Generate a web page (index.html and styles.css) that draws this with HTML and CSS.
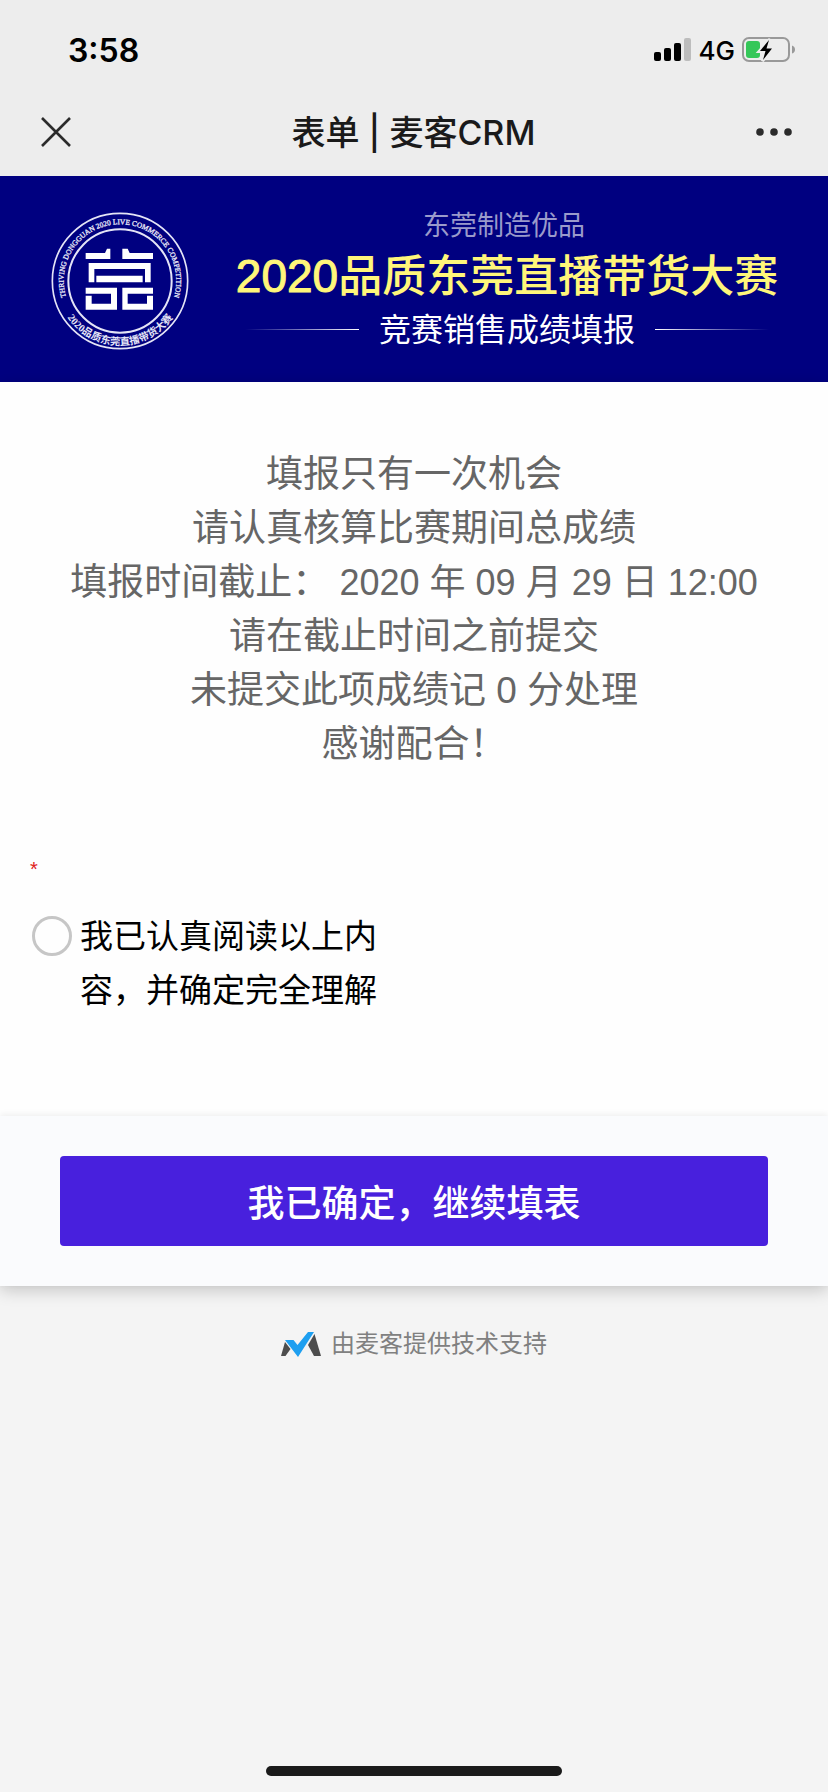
FILE: index.html
```html
<!DOCTYPE html>
<html lang="zh-CN">

<head>
    <meta charset="UTF-8">
    <meta name="viewport" content="width=device-width, initial-scale=1.0">
    <title>表单 | 麦客CRM</title>

    <link rel="stylesheet" href="styles.css">
</head>

<body>
    <header class="top">
        <div class="status-bar">
            <span class="time">3:58</span>
            <div class="status-icons">
                <svg class="signal" width="38" height="24" viewBox="0 0 38 24">
                    <rect x="0" y="14" width="7" height="9" rx="2" />
                    <rect x="10" y="10" width="7" height="13" rx="2" />
                    <rect x="20" y="5" width="7" height="18" rx="2" />
                    <rect x="30" y="0" width="7" height="23" rx="2" fill="#bdbdbd" />
                </svg>
                <span class="network">4G</span>
                <svg class="battery" width="54" height="26" viewBox="0 0 54 26">
                    <rect x="1" y="1" width="46" height="23" rx="6" fill="none" stroke="#999" stroke-width="2" />
                    <rect x="4" y="4" width="14" height="17" rx="3" fill="#35c759" />
                    <path d="M50 8.500q3 1 3 4t-3 4z" fill="#999" />
                    <path d="M28 2L17 14.500h5.500L20.500 24 31 11h-5.500z" stroke="#ededed" stroke-width="3" fill="#ededed" />
                    <path d="M27 3L18 14h5.500L21 23 30 11.500h-5.500z" />
                </svg>
            </div>
        </div>
        <nav class="nav">
            <button class="nav-button" aria-label="关闭">
                <svg width="30" height="30" viewBox="0 0 30 30" fill="none" stroke="#2b2b2b" stroke-width="2.600">
                    <path d="M1 1l28 28M29 1L1 29" />
                </svg>
            </button>
            <h1 class="nav-title">表单 | 麦客CRM</h1>
            <button class="nav-button" aria-label="更多">
                <svg width="36" height="30" viewBox="0 0 36 30" fill="#2b2b2b">
                    <circle cx="4" cy="15" r="3.800" />
                    <circle cx="18" cy="15" r="3.800" />
                    <circle cx="32" cy="15" r="3.800" />
                </svg>
            </button>
        </nav>
    </header>

    <section class="banner">
        <svg class="badge" width="138" height="138" viewBox="0 0 414 414">
            <defs>
                <path id="arc-top" d="M46 257A169 169 0 1 1 368 257" />
                <path id="arc-bottom" d="M33 289A192 192 0 0 0 381 289" />
            </defs>
            <g fill="none" stroke="#e4e4f6">
                <circle cx="207" cy="207" r="203" stroke-width="5" />
                <circle cx="207" cy="207" r="155" stroke-width="6" />
            </g>
            <text class="badge-en"><textPath href="#arc-top" startOffset="50%">THRIVING DONGGUAN 2020 LIVE COMMERCE COMPETITION</textPath></text>
            <text class="badge-cn"><textPath href="#arc-bottom" startOffset="50%">2020品质东莞直播带货大赛</textPath></text>
            <g fill="#fff">
                <path d="M104 123h58l6-13h10v31h-74z" />
                <path d="M214 110h16l6 13h70v18h-92z" />
                <path d="M113 153h186v58h-17v-40H130v40h-17z" />
                <path d="M136 191h139v20H136z" />
                <path d="M104 227h94v66h-94v-42h18v24h58v-30h-76z" />
                <path d="M214 227h92v18h-76v30h58v-24h18v42h-92z" />
            </g>
        </svg>
        <div class="banner-text">
            <p class="banner-small">东莞制造优品</p>
            <h2 class="banner-title"><span class="year">2020</span>品质东莞直播带货大赛</h2>
            <p class="banner-sub">竞赛销售成绩填报</p>
        </div>
    </section>

    <form class="form">
        <div class="notice">
            <p>填报只有一次机会</p>
            <p>请认真核算比赛期间总成绩</p>
            <p>填报时间截止： <time datetime="2020-09-29T12:00">2020 年 09 月 29 日 12:00</time></p>
            <p>请在截止时间之前提交</p>
            <p>未提交此项成绩记 0 分处理</p>
            <p>感谢配合！</p>
        </div>
        <div class="field">
            <span class="required">*</span>
            <div class="option">
                <input type="radio" id="agree" name="agree">
                <label for="agree">我已认真阅读以上内容，并确定完全理解</label>
            </div>
        </div>
        <div class="submit-bar">
            <button type="submit" class="submit">我已确定，继续填表</button>
        </div>
    </form>

    <footer class="support">
        <svg width="40" height="25" viewBox="0 0 40 25">
            <path d="M4 10L0 24h4.500l5-7z" fill="#4d4d4d" />
            <path d="M33.500 2L40 24h-7L27 13z" fill="#4d4d4d" />
            <path d="M4 8h8.500l4 5L27 0h6L17 25z" fill="#1e9ff0" />
        </svg>
        <span>由麦客提供技术支持</span>
    </footer>

    <div class="home-indicator"></div>
</body>

</html>
```
FILE: styles.css
```css
* {
    margin: 0;
    padding: 0;
    box-sizing: border-box;
}

body {
    min-height: 100vh;
    display: flex;
    flex-direction: column;
    background-color: #f4f4f4;
    font-family: "Liberation Sans", "Noto Sans CJK SC", sans-serif;
}

button {
    border: none;
    background: none;
    font-family: inherit;
}

/* top bars */
.top {
    height: 176px;
    background-color: #ededed;
    font-family: Inter, "Noto Sans CJK SC", sans-serif;
}

.status-bar {
    height: 88px;
    padding: 12px 32px 0 68px;
    display: flex;
    justify-content: space-between;
    align-items: center;
}

.time {
    font-size: 32px;
    font-weight: 600;
}

.status-icons {
    display: flex;
    align-items: center;
    gap: 7px;
}

.network {
    font-size: 26px;
    font-weight: 500;
}

.nav {
    height: 88px;
    padding: 0 36px 0 41px;
    display: flex;
    justify-content: space-between;
    align-items: center;
}

.nav-button {
    display: flex;
}

.nav-title {
    padding-bottom: 4px;
    font-size: 34px;
    font-weight: 500;
    color: #1a1a1a;
}

/* banner */
.banner {
    height: 206px;
    padding: 0 48px 0 51px;
    display: flex;
    justify-content: space-between;
    align-items: center;
    background-color: #000080;
}

.badge {
    margin-top: 4px;
}

.badge-en,
.badge-cn {
    fill: #e4e4f6;
    font-family: "Liberation Serif", "Noto Sans CJK SC", serif;
    text-anchor: middle;
}

.badge-en {
    font-size: 22px;
    stroke: #e4e4f6;
}

.badge-cn {
    font-size: 31px;
    font-weight: bold;
}

.banner-text {
    width: 546px;
    text-align: center;
    white-space: nowrap;
}

.banner-small {
    padding-right: 6px;
    font-size: 27px;
    line-height: 40px;
    color: #9a9acb;
}

.banner-title {
    font-size: 44px;
    line-height: 60px;
    font-weight: 500;
    color: #fff67a;
}

.year {
    font-size: 46px;
    -webkit-text-stroke: 1px #fff67a;
}

.banner-sub {
    display: flex;
    align-items: center;
    justify-content: center;
    gap: 20px;
    font-size: 32px;
    line-height: 46px;
    color: #fff;
}

.banner-sub::before,
.banner-sub::after {
    content: "";
    width: 114px;
    height: 1px;
    background: linear-gradient(to left, #fff, transparent);
}

.banner-sub::after {
    background: linear-gradient(to right, #fff, transparent);
}

/* form */
.form {
    background-color: #fefefe;
    box-shadow: 0 4px 16px rgba(0, 0, 0, 0.2);
}

.notice {
    padding: 66px 16px 0;
    font-size: 37px;
    line-height: 54px;
    color: #666;
    text-align: center;
}

.notice time {
    font-size: 36px;
}

.field {
    padding: 82px 0 98px 30px;
}

.required {
    display: block;
    height: 56px;
    font-size: 20px;
    line-height: 30px;
    color: #e02020;
}

.option {
    width: 50%;
    padding-right: 16px;
    display: flex;
    gap: 8px;
    font-size: 33px;
    line-height: 54px;
    color: #000;
}

.option input {
    appearance: none;
    flex: none;
    width: 40px;
    height: 40px;
    margin: 6px 0 0 2px;
    border: 3px solid #c6c6c6;
    border-radius: 50%;
}

.submit-bar {
    padding: 40px 60px;
    background-color: #fafbfd;
    box-shadow: 0 -2px 6px rgba(0, 0, 0, 0.06);
}

.submit {
    width: 100%;
    height: 90px;
    border-radius: 4px;
    background-color: #4820dd;
    color: #fff;
    font-size: 37px;
    font-weight: 500;
}

/* footer */
.support {
    margin-top: 40px;
    display: flex;
    justify-content: center;
    align-items: center;
    gap: 10px;
    font-size: 24px;
    line-height: 36px;
    color: #808080;
}

.home-indicator {
    width: 296px;
    height: 10px;
    margin: auto auto 16px;
    border-radius: 5px;
    background-color: #1a1a1a;
}
```
